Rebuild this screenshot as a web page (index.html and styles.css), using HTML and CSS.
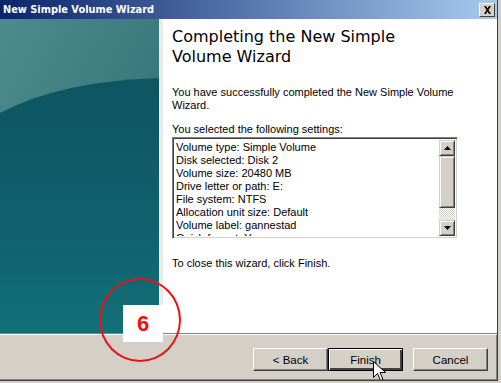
FILE: index.html
```html
<!DOCTYPE html>
<html lang="en">
<head>
  <meta charset="UTF-8" />
  <title>New Simple Volume Wizard</title>
  <link rel="stylesheet" href="styles.css">
</head>
<body>
  <div class="window">
    <div class="titlebar">
      <span class="title">New Simple Volume Wizard</span>
      <span class="close">
        <svg width="9" height="8" viewBox="0 0 9 8"><path d="M1 0h2l1.5 2.5L6 0h2L5.5 4 8 8H6L4.5 5.5 3 8H1l2.5-4z" fill="#000"/></svg>
      </span>
    </div>

    <div class="main">
      <div class="side">
        <svg width="159" height="314" viewBox="0 0 159 314">
          <defs>
            <linearGradient id="top" x1="0" y1="0" x2="1" y2="1">
              <stop offset="0" stop-color="#4e8b8b"/>
              <stop offset="1" stop-color="#2a6b72"/>
            </linearGradient>
            <linearGradient id="low" x1="0" y1="0" x2="0" y2="1">
              <stop offset="0" stop-color="#0e5562"/>
              <stop offset="0.6" stop-color="#10616f"/>
              <stop offset="1" stop-color="#117078"/>
            </linearGradient>
          </defs>
          <rect width="159" height="314" fill="url(#top)"/>
          <path d="M0 94 Q60 62 159 59 V314 H0z" fill="url(#low)"/>
        </svg>
      </div>

      <div class="content">
        <h1>Completing the New Simple Volume Wizard</h1>
        <p>You have successfully completed the New Simple Volume Wizard.</p>
        <p class="label">You selected the following settings:</p>
        <div class="listbox">
          <div class="items">
            <div>Volume type: Simple Volume</div>
            <div>Disk selected: Disk 2</div>
            <div>Volume size: 20480 MB</div>
            <div>Drive letter or path: E:</div>
            <div>File system: NTFS</div>
            <div>Allocation unit size: Default</div>
            <div>Volume label: gannestad</div>
            <div>Quick format: Yes</div>
          </div>
          <div class="scrollbar">
            <div class="sbtn"><svg width="7" height="4" viewBox="0 0 7 4"><path d="M3.5 0L7 4H0z"/></svg></div>
            <div class="thumb"></div>
            <div class="track"></div>
            <div class="sbtn"><svg width="7" height="4" viewBox="0 0 7 4"><path d="M0 0h7L3.5 4z"/></svg></div>
          </div>
        </div>
        <p class="closing">To close this wizard, click Finish.</p>
      </div>
    </div>

    <div class="footer">
      <button class="btn">&lt; Back</button>
      <button class="btn default">Finish</button>
      <button class="btn cancel">Cancel</button>
    </div>

    <!-- annotation over the screenshot -->
    <div class="marker"></div>
    <div class="step">6</div>
    <svg class="cursor" width="13" height="21" viewBox="0 0 13 21">
      <path d="M0.5 0.5V16.5L4.5 12.5L7.5 19.5L10 18.5L7 11.5H12.5Z" fill="#fff" stroke="#000"/>
    </svg>
  </div>
</body>
</html>
```

FILE: styles.css
```css
body {
  margin: 0;
  padding: 0;
  background-color: #d4d0c8;
  font-family: 'Liberation Sans', Arial, sans-serif;
  font-size: 11px;
  color: #000;
}
.window {
  position: relative;
  width: 497px;
  height: 380px;
  display: flex;
  flex-direction: column;
  border-right: 1px solid #404040;
  border-bottom: 1px solid #404040;
  box-shadow: inset -1px -1px 0 #808080;
  background-color: #d4d0c8;
  overflow: hidden;
}
.titlebar {
  height: 19px;
  display: flex;
  align-items: center;
  justify-content: space-between;
  padding: 0 2px 0 3px;
  background: linear-gradient(to right, #0a246a, #a6caf0);
}
.title {
  color: #fff;
  font-family: 'DejaVu Sans', Verdana, sans-serif;
  font-weight: bold;
  font-size: 9.8px;
}
.close {
  width: 16px;
  height: 14px;
  box-sizing: border-box;
  display: flex;
  align-items: center;
  justify-content: center;
  background-color: #d4d0c8;
  border: 1px solid;
  border-color: #fff #404040 #404040 #fff;
}
.main {
  height: 314px;
  display: flex;
  background-color: #fff;
  border-bottom: 1px solid #808080;
  box-shadow: 0 1px 0 #fff;
}
.side {
  width: 159px;
  flex-shrink: 0;
}
.side svg {
  display: block;
}
.content {
  flex: 1;
  padding: 8px 0 0 9px;
  border-left: 4px solid #ecebe7;
}
h1 {
  margin: 0 0 19px 0;
  font-family: 'DejaVu Sans', Verdana, sans-serif;
  font-weight: normal;
  font-size: 16px;
  line-height: 20px;
  width: 250px;
}
p {
  margin: 0;
  line-height: 13px;
  width: 290px;
}
.label {
  margin-top: 11px;
  margin-bottom: 1px;
}
.listbox {
  width: 286px;
  height: 102px;
  box-sizing: border-box;
  display: flex;
  border: 1px solid;
  border-color: #808080 #fff #fff #808080;
  box-shadow: inset 1px 1px 0 #404040, inset -1px -1px 0 #d4d0c8;
  padding: 2px;
}
.items {
  flex: 1;
  overflow: hidden;
  padding: 1px 0 0 1px;
  line-height: 13px;
  font-size: 11px;
}
.scrollbar {
  width: 16px;
  display: flex;
  flex-direction: column;
}
.sbtn, .thumb {
  box-sizing: border-box;
  background-color: #d4d0c8;
  border: 1px solid;
  border-color: #d4d0c8 #404040 #404040 #d4d0c8;
  box-shadow: inset 1px 1px 0 #fff, inset -1px -1px 0 #808080;
}
.sbtn {
  height: 16px;
  display: flex;
  align-items: center;
  justify-content: center;
}
.thumb {
  height: 52px;
}
.track {
  flex: 1;
  background-color: #ecebe7;
  background-image: repeating-conic-gradient(#d4d0c8 0 25%, #fff 0 50%);
  background-size: 2px 2px;
}
.closing {
  margin-top: 18px;
}
.footer {
  flex: 1;
  display: flex;
  align-items: flex-start;
  padding: 14px 0 0 253px;
}
.btn {
  width: 75px;
  height: 23px;
  box-sizing: border-box;
  font-family: 'Liberation Sans', Arial, sans-serif;
  font-size: 11.5px;
  color: #000;
  background-color: #d4d0c8;
  border: 1px solid;
  border-color: #fff #404040 #404040 #fff;
  box-shadow: inset -1px -1px 0 #808080;
  padding: 0;
}
.default {
  border: 1px solid #000;
  box-shadow: inset 1px 1px 0 #fff, inset -2px -2px 0 #404040, inset -1px -1px 0 #808080;
}
.cancel {
  margin-left: 10px;
}
.marker {
  position: absolute;
  left: 99px;
  top: 278px;
  width: 82px;
  height: 84px;
  box-sizing: border-box;
  border: 2px solid #ee1111;
  border-radius: 50%;
}
.step {
  position: absolute;
  left: 123px;
  top: 305px;
  width: 40px;
  height: 37px;
  background-color: #fff;
  color: #ee1111;
  font-family: 'Liberation Sans', Arial, sans-serif;
  font-weight: bold;
  font-size: 22px;
  line-height: 37px;
  text-align: center;
}
.cursor {
  position: absolute;
  left: 373px;
  top: 361px;
}
```
